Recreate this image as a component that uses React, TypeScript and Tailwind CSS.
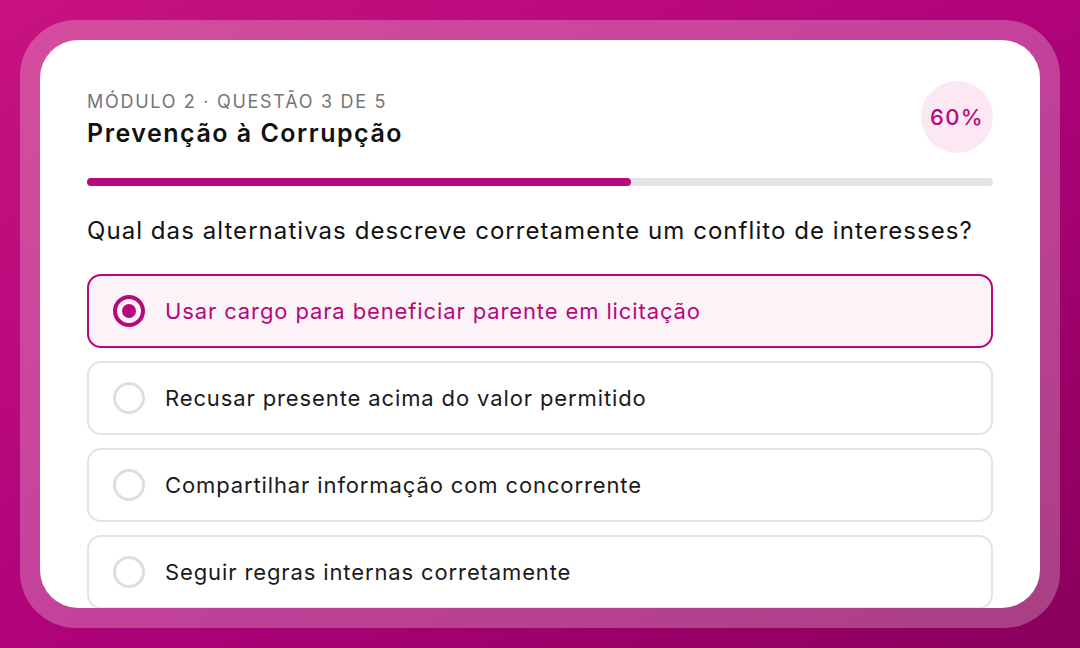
import { useState } from 'react';

const options = [
  'Usar cargo para beneficiar parente em licitação',
  'Recusar presente acima do valor permitido',
  'Compartilhar informação com concorrente',
  'Seguir regras internas corretamente',
];

function Radio({ checked }: { checked: boolean }) {
  if (checked) {
    return (
      <span className="flex h-[32px] w-[32px] shrink-0 items-center justify-center rounded-full border-[4px] border-[#b5087e]">
        <span className="h-[14px] w-[14px] rounded-full bg-[#b5087e]" />
      </span>
    );
  }
  return <span className="h-[32px] w-[32px] shrink-0 rounded-full border-[3px] border-[#dedede]" />;
}

export default function App() {
  const [selected, setSelected] = useState(0);
  const progress = 60;

  return (
    <div
      className="h-[648px] w-[1080px] bg-gradient-to-br from-[#c8127f] via-[#b0037a] to-[#8a005b] p-5"
      style={{ fontFamily: 'Inter, "Noto Sans", sans-serif' }}
    >
      <div className="h-full rounded-[56px] bg-white/25 p-5">
        <div className="h-full overflow-hidden rounded-[38px] bg-white px-[47px] pt-[41px]">
          <div className="flex h-[72px] items-start justify-between">
            <div className="flex flex-col pt-[9px]">
              <span className="text-[18px] leading-[24px] tracking-[0.095em] text-[#757575]">
                MÓDULO 2 · QUESTÃO 3 DE 5
              </span>
              <span className="mt-[3px] text-[25px] font-semibold leading-[32px] tracking-[0.06em] text-[#111]">
                Prevenção à Corrupção
              </span>
            </div>
            <div className="flex h-[72px] w-[72px] items-center justify-center rounded-full bg-[#fbe8f3] text-[22px] font-medium tracking-[0.06em] text-[#b5087e]">
              {progress}%
            </div>
          </div>

          <div className="mt-[25px] h-[8px] w-full rounded-full bg-[#e4e4e4]">
            <div className="h-full rounded-full bg-[#b8087f]" style={{ width: `${progress}%` }} />
          </div>

          <p className="mt-[29px] text-[24px] leading-[32px] tracking-[0.044em] text-[#111]">
            Qual das alternativas descreve corretamente um conflito de interesses?
          </p>

          <div className="mt-[27px] flex flex-col gap-[13px]">
            {options.map((label, i) => {
              const active = i === selected;
              return (
                <button
                  key={label}
                  onClick={() => setSelected(i)}
                  className={
                    active
                      ? 'flex h-[74px] items-center gap-[20px] rounded-[14px] border-2 border-[#b5087e] bg-[#fcf3f9] px-[24px] text-left'
                      : 'flex h-[74px] items-center gap-[20px] rounded-[14px] border-2 border-[#e3e3e3] bg-white px-[24px] text-left'
                  }
                >
                  <Radio checked={active} />
                  <span
                    className={
                      active
                        ? 'text-[22px] tracking-[0.04em] text-[#b5087e]'
                        : 'text-[22px] tracking-[0.04em] text-[#1a1a1a]'
                    }
                  >
                    {label}
                  </span>
                </button>
              );
            })}
          </div>
        </div>
      </div>
    </div>
  );
}
